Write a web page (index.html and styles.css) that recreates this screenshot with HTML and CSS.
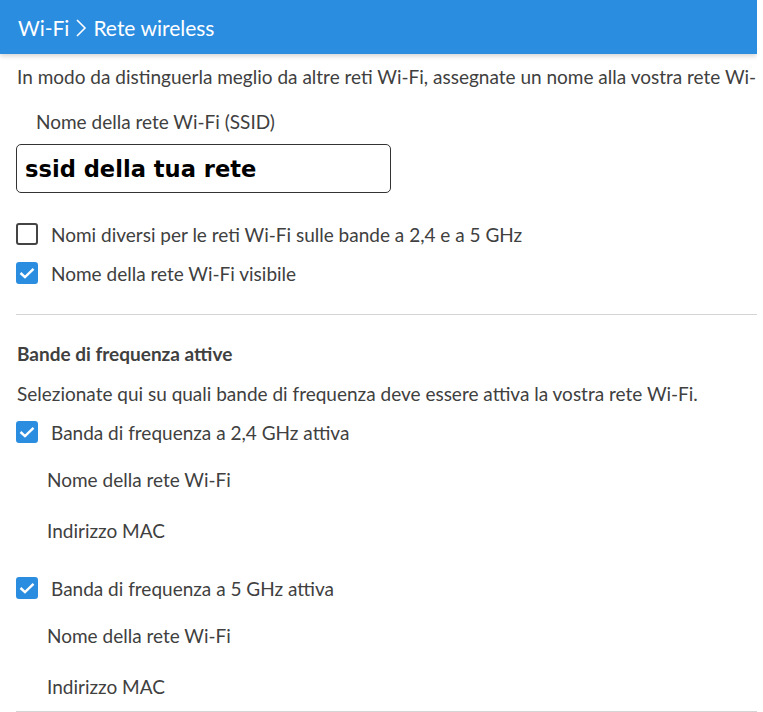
FILE: index.html
```html
<!DOCTYPE html>
<html lang="it">
<head>
<meta charset="utf-8">
<title>Rete wireless</title>
<link rel="stylesheet" href="styles.css">
</head>
<body>
<div class="page">
  <header class="topbar">
    <span class="crumb">Wi-Fi</span>
    <svg class="sep" width="12" height="20" viewBox="0 0 12 20"><path d="M2 2 L10 10 L2 18" fill="none" stroke="#fff" stroke-width="1.6"/></svg>
    <span class="crumb">Rete wireless</span>
  </header>
  <main class="content">
    <p class="intro">In modo da distinguerla meglio da altre reti Wi-Fi, assegnate un nome alla vostra rete Wi-Fi.</p>
    <div class="field">
      <label class="field-label">Nome della rete Wi-Fi (SSID)</label>
      <div class="input">ssid della tua rete</div>
    </div>
    <div class="check-row first">
      <span class="box"></span>
      <span>Nomi diversi per le reti Wi-Fi sulle bande a 2,4 e a 5 GHz</span>
    </div>
    <div class="check-row">
      <span class="box on"><svg width="16" height="12" viewBox="0 0 16 12"><path d="M1.5 6 L6 10.2 L14.5 1.8" fill="none" stroke="#fff" stroke-width="2.4"/></svg></span>
      <span>Nome della rete Wi-Fi visibile</span>
    </div>
    <hr class="divider">
    <h2 class="section-title">Bande di frequenza attive</h2>
    <p class="desc">Selezionate qui su quali bande di frequenza deve essere attiva la vostra rete Wi-Fi.</p>
    <div class="band">
      <div class="check-row">
        <span class="box on"><svg width="16" height="12" viewBox="0 0 16 12"><path d="M1.5 6 L6 10.2 L14.5 1.8" fill="none" stroke="#fff" stroke-width="2.4"/></svg></span>
        <span>Banda di frequenza a 2,4 GHz attiva</span>
      </div>
      <div class="sub">Nome della rete Wi-Fi</div>
      <div class="sub">Indirizzo MAC</div>
    </div>
    <div class="band">
      <div class="check-row">
        <span class="box on"><svg width="16" height="12" viewBox="0 0 16 12"><path d="M1.5 6 L6 10.2 L14.5 1.8" fill="none" stroke="#fff" stroke-width="2.4"/></svg></span>
        <span>Banda di frequenza a 5 GHz attiva</span>
      </div>
      <div class="sub">Nome della rete Wi-Fi</div>
      <div class="sub">Indirizzo MAC</div>
    </div>
    <hr class="divider bottom">
  </main>
</div>
</body>
</html>
```

FILE: styles.css
```css
html, body {
  margin: 0;
  padding: 0;
  background: #fff;
}
body {
  font-family: Lato, "Noto Sans", sans-serif;
  color: #404040;
  overflow: hidden;
}
.page {
  width: 757px;
  overflow: hidden;
}
.topbar {
  height: 54px;
  background: #2b8de0;
  display: flex;
  align-items: center;
  gap: 6px;
  padding-left: 18px;
  box-shadow: 0 2px 5px rgba(0,0,0,0.18);
  color: #fff;
  font-size: 21px;
  position: relative;
}
.topbar .sep {
  margin-top: 2px;
}
.content {
  padding-left: 16px;
}
.intro {
  margin: 0;
  padding-top: 12px;
  font-size: 19px;
  line-height: 22px;
  white-space: nowrap;
  padding-left: 1px;
}
.field {
  padding-top: 23px;
}
.field-label {
  display: block;
  padding-left: 20px;
  font-size: 19px;
  line-height: 22px;
}
.input {
  margin-top: 11px;
  width: 365px;
  height: 47px;
  border: 1px solid #333;
  border-radius: 5px;
  font-family: "DejaVu Sans", Verdana, sans-serif;
  font-weight: bold;
  font-size: 22.6px;
  color: #000;
  display: flex;
  align-items: center;
  padding-left: 8px;
  box-sizing: content-box;
}
.check-row {
  display: flex;
  align-items: center;
  gap: 13px;
  font-size: 19px;
  height: 22px;
  margin-top: 17px;
}
.check-row.first {
  margin-top: 30px;
}
.box {
  width: 18px;
  height: 18px;
  border: 2px solid #444;
  border-radius: 3px;
  display: flex;
  align-items: center;
  justify-content: center;
  flex: none;
}
.box.on {
  background: #2b8de0;
  border-color: #2b8de0;
}
.divider {
  border: none;
  border-top: 1px solid #d4d4d4;
  margin: 30px 0 0 0;
}
.section-title {
  margin: 0;
  padding-top: 28px;
  font-size: 19px;
  font-weight: 700;
  line-height: 22px;
  padding-left: 1px;
}
.desc {
  margin: 0;
  padding-top: 18px;
  font-size: 19px;
  line-height: 22px;
  padding-left: 1px;
}
.band .check-row {
  margin-top: 16px;
}
.band + .band .check-row {
  margin-top: 35px;
}
.sub {
  padding-left: 31px;
  font-size: 19px;
  line-height: 22px;
  margin-top: 26px;
}
.sub + .sub {
  margin-top: 29px;
}
.divider.bottom {
  margin-top: 13px;
}
```
